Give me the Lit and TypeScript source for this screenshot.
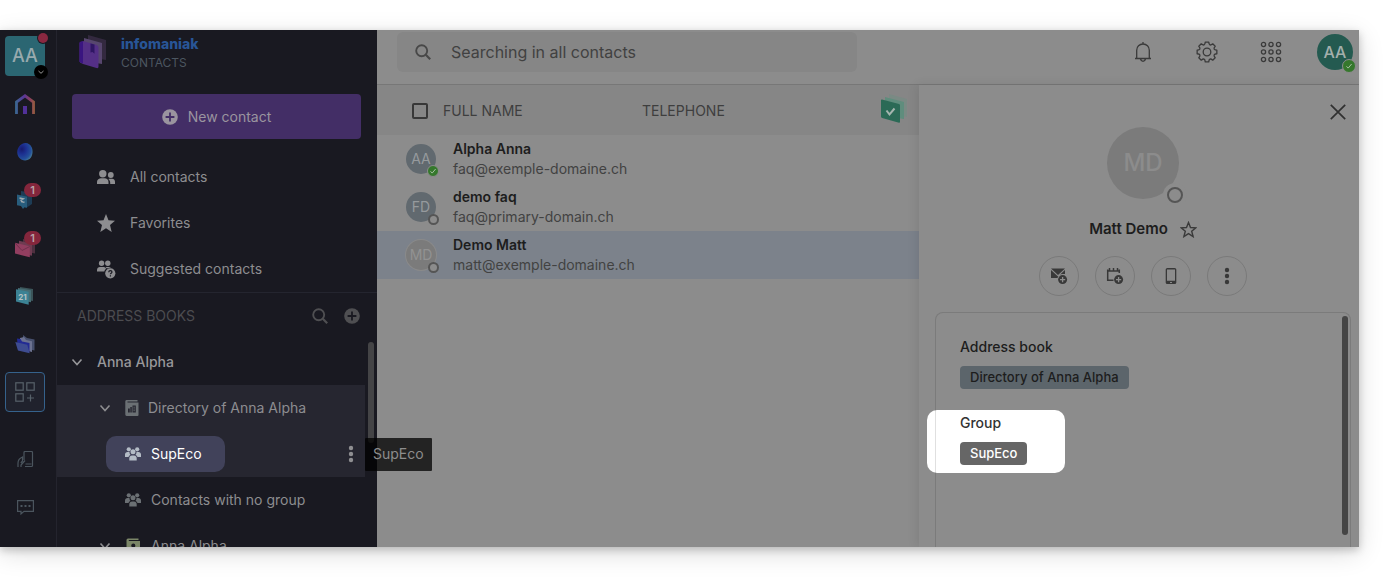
import { LitElement, html, css, svg, nothing, TemplateResult } from "lit";
import { customElement, property, state } from "lit/decorators.js";
import { classMap } from "lit/directives/class-map.js";

const base = css`
  *, *::before, *::after { box-sizing: border-box; }
  :host { font-family: Inter, "Liberation Sans", sans-serif; font-size: 14px; line-height: 20px; }
  button, input { font: inherit; color: inherit; }
  button { background: none; border: 0; padding: 0; margin: 0; text-align: left; cursor: pointer; }
  a { color: inherit; text-decoration: none; }
  svg { display: block; flex: none; }
`;

const draw = (w: number, h: number, body: unknown) => html`
  <svg width=${w} height=${h} viewBox="0 0 ${w} ${h}" fill="none" aria-hidden="true">${body}</svg>`;

const chevron = draw(12, 12, svg`<path d="M1.500 3.500 6 8.500l4.500-5" stroke="currentColor" stroke-width="1.600"/>`);
const magnifier = draw(16, 16, svg`<circle cx="6.700" cy="6.700" r="5.500" stroke="currentColor" stroke-width="1.900"/><path d="m10.800 10.800 4.400 4.400" stroke="currentColor" stroke-width="2.200"/>`);
const plusDisc = (ink: string) => draw(16, 16, svg`<circle cx="8" cy="8" r="7.800" fill="currentColor"/><path d="M8 3.600v8.800M3.600 8h8.800" stroke=${ink} stroke-width="1.800"/>`);
const dots = draw(6, 18, svg`<g fill="currentColor"><circle cx="3" cy="3" r="2.200"/><circle cx="3" cy="9" r="2.200"/><circle cx="3" cy="15" r="2.200"/></g>`);
const people = draw(18, 16, svg`<g fill="currentColor"><circle cx="5.800" cy="4.700" r="3.700"/><path d="M0 15v-2c0-2.400 2.200-3.700 4-3.700h3.600c2 0 3.900 1.300 3.900 3.700v2z"/><circle cx="13.800" cy="6" r="2.900"/><path d="M11.300 10c1.200 1 1.900 2.200 1.900 3.700V15H18v-2.200c0-1.800-1.300-3-3-3h-2.600z"/></g>`);
const star = draw(18, 18, svg`<path fill="currentColor" d="m9 0 2.500 6.300 6.500.5-5 4.200 1.700 7L9 14.200 3.300 18 5 11 0 6.800l6.500-.5z"/>`);
const suggested = draw(19, 19, svg`<g fill="currentColor"><circle cx="4.600" cy="3.200" r="2.700"/><circle cx="10.800" cy="3.200" r="2.700"/><path d="M0 11.500V10c0-1.800 1.300-3 3-3h3.300c1.300 0 2.200.6 2.800 1.700-1 .8-1.600 1.700-1.800 2.800zM8.300 7h3.700c1 0 1.700.3 2.200.9-1.600-.3-3 0-4.300.7-.4-.6-.9-1.200-1.600-1.600z"/><circle cx="13.300" cy="13.300" r="5.100"/></g><path d="M11.700 12.200c.1-1 .7-1.500 1.600-1.500 1 0 1.700.5 1.700 1.400 0 1.100-1.600 1.100-1.600 2.200M13.400 15.300v1.200" stroke="#191921" stroke-width="1.200"/>`);
const group = draw(16, 14, svg`<g fill="currentColor"><circle cx="3.800" cy="2.300" r="2.100"/><circle cx="12.200" cy="2.300" r="2.100"/><circle cx="8" cy="4.800" r="2.500"/><path d="M0 10V7.600C0 6 1.100 5 2.500 5h2c0 1.500.4 2.300 1.200 3-1.200.4-1.900 1.100-2.100 2zM16 10V7.600C16 6 14.900 5 13.500 5h-2c0 1.500-.4 2.300-1.200 3 1.200.4 1.900 1.100 2.100 2zM4.300 13.500v-2.300c0-1.700 1.200-2.700 2.700-2.700h2c1.500 0 2.700 1 2.700 2.700v2.300z"/></g>`);
const directory = draw(14, 16, svg`<path fill="currentColor" d="M2 0h10.500v1.500H2.500v1H13.500V15a1 1 0 0 1-1 1H1.500A1.500 1.500 0 0 1 .3 14.500v-13A1.500 1.500 0 0 1 2 0z"/><path fill="#262630" d="M3 8.500h1.800v4H3zM5.300 7h1.500v5.500H5.300zM7.500 5.500h3.300v7H7.500z"/><path stroke="#6b7074" stroke-width=".8" d="M8.400 7.200h1.500M8.400 9h1.500M8.400 10.700h1.500"/>`);
const book = draw(14, 16, svg`<path fill="#7b8668" d="M2 .5h10.500V2H2.800v1H14v13H.5V2A1.500 1.500 0 0 1 2 .5z"/><circle cx="7.300" cy="7.500" r="2" fill="#191921"/><path d="M4 12.500c0-2 1.500-2.800 3.300-2.800s3.300.8 3.300 2.800z" fill="#191921"/>`);

const railHome = draw(20, 20, svg`
  <defs><linearGradient id="g" x1="0" x2="20" y1="0" y2="0" gradientUnits="userSpaceOnUse"><stop offset="0" stop-color="#386b90"/><stop offset=".45" stop-color="#59369a"/><stop offset=".75" stop-color="#8b3f5f"/><stop offset="1" stop-color="#96603c"/></linearGradient></defs>
  <path d="M1.500 20V8L10 1.800 18.500 8v12" stroke="url(#g)" stroke-width="2.800"/><path d="M8 20v-8h4v8z" fill="#52319a"/>`);
const railBall = draw(18, 20, svg`
  <defs><radialGradient id="b" cx=".3" cy=".35" r=".8"><stop offset="0" stop-color="#171a6c"/><stop offset=".35" stop-color="#1c2f90"/><stop offset=".75" stop-color="#24509b"/><stop offset="1" stop-color="#4d8496"/></radialGradient></defs>
  <path d="M6 2c4-2 8-.5 9.800 3.500 1.500 4 .8 9-2.300 11.500-3 2.300-8 1.700-10.500-1.500C.2 12 .5 5 6 2z" fill="url(#b)"/>`);
const railChat = draw(20, 20, svg`<path d="m6 1 11 2v11l-6 4-5-2z" fill="#1d3c55"/><path d="m2 4.500 10 2.200v11L9.700 17 8 19l-2-3-4-.8z" fill="#285d7d"/><path d="m4.500 8 3.800.8-2.800 1.700M6 11.500l3.500.8M5.500 10.300l3 2.200" stroke="#a3aab0" stroke-width="1.400"/>`);
const railMail = draw(20, 20, svg`<path d="m8 1 12 2.500v12L8 13z" fill="#4e3040"/><path d="m4 2.700 13 3v12L4 15z" fill="#6f3b51"/><path d="m0 4.800 14.800 3.500v11L0 15.600z" fill="#923e60"/><path d="m0 5 7 7.500 7.800-4" stroke="#70304c" stroke-width="1"/>`);
const railCalendar = draw(20, 20, svg`<path d="m5 1 13 2v12L5 13z" fill="#3b5459"/><path d="m3 2 13 2.200v12L3 14z" fill="#476d74"/><path d="m1 3.200 12.700 2.600v13L1 15.500z" fill="#3c8294"/><text x="7.400" y="14" text-anchor="middle" font-size="8" font-weight="700" fill="#b6c2c5">21</text>`);
const railDrive = draw(20, 20, svg`<path d="m8 1 4 3 7.500 1.500v11L8 14z" fill="#47506e"/><path d="m5 4 4-1 2 3 6 1.300V18L5 15z" fill="#6c7290"/><path d="m2 4.500 3.500.5 1.500 2.500 7.500 1.500v9L3 16z" fill="#222a94"/><path d="m.300 8 12 2.800 2.400 8.500L3 16.500z" fill="#3e4c91"/>`);
const railApps = draw(20, 20, svg`<g stroke="#57616a" stroke-width="1.200"><rect x=".8" y=".8" width="7.400" height="7.400"/><rect x="11.800" y=".8" width="7.400" height="7.400"/><rect x=".8" y="11.800" width="7.400" height="7.400"/><path d="M15.500 12.500v7M12 16h7"/></g>`);
const railTouch = draw(17, 17, svg`<g stroke="#4b555e" stroke-width="1.200"><path d="M7 9V1.500c0-.6.400-1 1-1h6.500c.6 0 1 .4 1 1v13c0 .6-.4 1-1 1H8"/><path d="M1 16v-4c0-3 2-5 4.500-6v4L3.800 12M4 16v-2l4-4.500M8.500 13h6"/></g>`);
const railComment = draw(17, 17, svg`<path d="M.6 1.600h15.800v10.800H7L4 15v-2.600H.6z" stroke="#4b555e" stroke-width="1.200"/><path d="M3.500 6h2v2h-2zM7.500 6h2v2h-2zM11.500 6h2v2h-2z" fill="#4b555e"/>`);

const logo = draw(28, 35, svg`<path d="m9 0 18 5v20L9 22z" fill="#33293f"/><path d="m5 3 18 5v21L5 26z" fill="#57466e"/><path d="m4 6 13.500 4q2 .6 2 2.600v19q0 2-2 1.400L4 29q-3.500-1.200-3.500-2.500V8z" fill="#542f86"/><path d="M.5 7 4 6v22.500L.5 27z" fill="#3a1580"/><path d="m11.500 8.500 4 1.100v9.200l-2-1.800-2 .6z" fill="#2f1663"/>`);
const tasks = draw(27, 29, svg`<path d="m8 0 18 5v18L8 19z" fill="#7a8a84"/><path d="m4 3 19 5v17L4 22z" fill="#5f8d7d"/><path d="M1 5.500 18 10q1 .3 1 1.300v16.500q0 1.200-1 .9L1.200 24Q0 23.700 0 22.500V6.300Q0 5.200 1 5.500z" fill="#2b6a56"/><path d="m5.500 16.500 3 4 5-6" stroke="#a5b5af" stroke-width="2"/>`);

const bell = draw(18, 20, svg`<path stroke="#3a3a3a" stroke-width="1.300" d="M9 0v2M1 16.500h16M2.700 16.500V8.300C2.700 4.600 5.400 2 9 2s6.300 2.600 6.300 6.300v8.200M6.500 17c.4 1.500 1.300 2.300 2.500 2.300s2.100-.8 2.500-2.300"/>`);
const gear = (() => {
  const parts: string[] = [];
  for (let tooth = 0; tooth < 8; tooth++) {
    const at = (deg: number, r: number) => {
      const a = ((tooth * 45 + deg) * Math.PI) / 180;
      return `${(11 + r * Math.sin(a)).toFixed(2)} ${(11 - r * Math.cos(a)).toFixed(2)}`;
    };
    parts.push(`${tooth ? "L" : "M"}${at(10, 10)}Q${at(22.5, 5.6)} ${at(35, 10)}`);
  }
  return draw(22, 22, svg`<g stroke="#3a3a3a" stroke-width="1.300" stroke-linejoin="round"><circle cx="11" cy="11" r="3.800"/><path d=${parts.join("") + "Z"}/></g>`);
})();
const grid = draw(22, 22, svg`<g stroke="#3a3a3a" stroke-width="1.300">${[3.5, 11, 18.5].map((y) => [3.5, 11, 18.5].map((x) => svg`<circle cx=${x} cy=${y} r="2.100"/>`))}</g>`);
const cross = draw(16, 16, svg`<path d="m.8.8 14.400 14.400M15.200.8.800 15.200" stroke="#303030" stroke-width="1.700"/>`);
const starLine = draw(17, 17, svg`<path d="m8.500 1.500 2 5 5.300.4-4.100 3.400 1.400 5.300-4.600-2.900-4.600 2.900 1.400-5.300L1.200 6.900l5.300-.4z" stroke="#3a3a3a" stroke-width="1.400"/>`);
const mailAdd = draw(18, 18, svg`<path d="M1 1.500h14L8 8zM1 3v8h6.500c.6-2.300 2.500-4 5-4H15V3L8 9.400z" fill="#383838"/><circle cx="12.600" cy="12.600" r="4.500" fill="#383838"/><path d="M12.600 10v5.200M10 12.600h5.200" stroke="#8c8c8c" stroke-width="1.300"/>`);
const eventAdd = draw(18, 18, svg`<path d="M7.500 13.200H1.700V2.500M13.300 6V2.500M1 4h13M3.500 1v3M7.500 1v3M11.500 1v3" stroke="#383838" stroke-width="1.500"/><circle cx="12.600" cy="12.600" r="4.500" fill="#383838"/><path d="M12.600 10v5.200M10 12.600h5.200" stroke="#8c8c8c" stroke-width="1.300"/>`);
const phone = draw(12, 16, svg`<path fill="#383838" fill-rule="evenodd" d="M2.500 0h7A1.800 1.800 0 0 1 11.300 2v12a1.800 1.800 0 0 1-1.800 2h-7A1.800 1.800 0 0 1 .7 14V2A1.800 1.800 0 0 1 2.500 0zM2 1.500v11.300h8V1.500zM5 14v1h2v-1z"/>`);

@customElement("presence-avatar")
class PresenceAvatar extends LitElement {
  @property() initials = "";
  @property() tone = "slate";
  @property() presence = "";
  @property() size = "small";

  static styles = [base, css`
    :host { display: block; flex: none; }
    .avatar { position: relative; display: grid; place-items: center; border-radius: 50%; color: #969a9d; }
    .small { width: 30px; height: 30px; font-size: 14px; }
    .medium { width: 36px; height: 36px; font-size: 16px; font-weight: 500; }
    .large { width: 72px; height: 72px; font-size: 24px; font-weight: 500; }
    .slate { background: #61696f; }
    .teal { background: #245a50; color: #a3afac; }
    .grey { background: #7b7b7b; color: #8c8c8c; }
    .small.grey { box-shadow: 0 0 0 1px #8a8a8a; color: #929292; }
    .badge { position: absolute; right: -3px; bottom: -3px; width: 12px; height: 12px; border-radius: 50%; display: grid; place-items: center; }
    .online { background: #35782c; border: 1px solid #8c8c8c; }
    .offline { border: 2px solid #555; background: #8c8c8c; }
    .small .offline { width: 11px; height: 11px; }
    .medium .badge { width: 14px; height: 14px; }
    .large .badge { width: 16px; height: 16px; right: -4px; bottom: -4px; box-shadow: 0 0 0 4px #8c8c8c; }
  `];

  render() {
    return html`<div class="avatar ${this.size} ${this.tone}">${this.initials}
      ${this.presence ? html`<span class="badge ${this.presence}">${this.presence === "online"
        ? draw(8, 8, svg`<path d="m1.500 4.300 1.700 1.800L6.600 2" stroke="#a8c0a5" stroke-width="1"/>`) : nothing}</span>` : nothing}
    </div>`;
  }
}

@customElement("product-rail")
class ProductRail extends LitElement {
  static styles = [base, css`
    :host { display: block; flex: none; }
    .rail { display: flex; flex-direction: column; gap: 8px; height: 100%; width: 57px; padding: 6px 11px 20px 5px; border-right: 1px solid #24242e; background: #191921; }
    .item { position: relative; display: flex; align-items: center; justify-content: center; width: 40px; height: 40px; flex: none; border-radius: 4px; }
    .org { background: #2b6672; color: #98aaae; font-size: 18px; font-weight: 500; }
    .alert { position: absolute; right: -3px; top: -3px; width: 10px; height: 10px; border-radius: 50%; background: #8a2840; box-shadow: 0 0 0 1px #191921; }
    .open { position: absolute; right: -3px; bottom: -3px; width: 14px; height: 14px; border-radius: 50%; background: #000; color: #999; display: grid; place-items: center; }
    .count { position: absolute; left: 19px; top: 3px; width: 17px; height: 14px; border-radius: 7px; background: #84263c; color: #b8a3a8; font-size: 11px; line-height: 14px; font-weight: 600; text-align: center; }
    .apps { border: 1px solid #35628c; background: #20222d; }
    .foot { margin-top: auto; display: grid; gap: 8px; }
  `];

  render() {
    const apps: [string, TemplateResult, number?][] = [
      ["Home", railHome], ["Assistant", railBall], ["Chat", railChat, 1], ["Mail", railMail, 1],
      ["Calendar", railCalendar], ["Drive", railDrive],
    ];
    return html`<nav class="rail" aria-label="Products">
      <button class="item org" aria-label="Organisation AA"><span>AA</span><span class="alert"></span>
        <span class="open">${draw(8, 8, svg`<path d="m1.500 3 2.500 2.300L6.500 3" stroke="currentColor"/>`)}</span></button>
      ${apps.map(([name, icon, n]) => html`<a class="item" href="#" aria-label=${name}>${icon}${n ? html`<span class="count">${n}</span>` : nothing}</a>`)}
      <button class="item apps" aria-label="Add products">${railApps}</button>
      <div class="foot">
        <button class="item" aria-label="Shortcuts">${railTouch}</button>
        <button class="item" aria-label="Feedback">${railComment}</button>
      </div>
    </nav>`;
  }
}

@customElement("address-sidebar")
class AddressSidebar extends LitElement {
  static styles = [base, css`
    :host { display: block; flex: none; }
    .side { display: flex; flex-direction: column; width: 320px; height: 100%; background: #191921; color: #8d8d90; }
    .brand { display: flex; align-items: center; gap: 14px; height: 49px; padding: 0 22px 4px; }
    .names { display: grid; padding-top: 2px; }
    .maker { color: #285596; font-weight: 800; font-size: 14px; line-height: 18px; }
    .product { color: #4c5660; font-size: 12px; line-height: 20px; }
    .new { display: flex; align-items: center; justify-content: center; gap: 10px; height: 45px; margin: 15px 16px 15px 15px; border-radius: 4px; background: #432e66; color: #9a949f; }
    .link { display: flex; align-items: center; height: 46px; padding-left: 39px; }
    .glyph { display: grid; place-items: center; width: 20px; margin-right: 14px; }
    .nav { border-bottom: 1px solid #24252f; height: 139px; }
    .head { display: flex; align-items: center; height: 46px; padding: 0 17px 0 20px; color: #4c4c50; }
    .heading { margin: 0 auto 0 0; font-size: 14px; font-weight: 400; }
    .tool { color: #4f4f52; margin-left: 16px; }
    .body { display: flex; flex: 1; min-height: 0; }
    .tree { flex: 1; min-width: 0; overflow: hidden; }
    .row { position: relative; display: flex; align-items: center; height: 46px; }
    .node { display: flex; align-items: center; gap: 10px; }
    .top { padding-left: 14px; gap: 14px; font-weight: 500; color: #97979a; }
    .sub { padding-left: 42px; gap: 14px; }
    .leaf { padding-left: 49px; }
    .pick { padding: 0 23px 0 19px; height: 36px; border-radius: 10px; }
    .hot { background: #262630; }
    .on { background: #41425a; color: #fff; }
    .on .ico { color: #b4bcc6; }
    .ico { color: #6b7074; width: 16px; display: grid; place-items: center; }
    .slim { width: 13px; }
    .more { margin: 0 11px 0 auto; color: #8f8f92; }
    .gutter { width: 12px; padding: 3px 3px 0; }
    .thumb { height: 101px; border-radius: 3px; background: #444446; }
  `];

  render() {
    return html`<aside class="side">
      <div class="brand">${logo}<div class="names"><span class="maker">infomaniak</span><span class="product">CONTACTS</span></div></div>
      <button class="new">${plusDisc("#432e66")}New contact</button>
      <nav class="nav">
        <a class="link" href="#"><span class="glyph">${people}</span>All contacts</a>
        <a class="link" href="#"><span class="glyph">${star}</span>Favorites</a>
        <a class="link" href="#"><span class="glyph">${suggested}</span>Suggested contacts</a>
      </nav>
      <div class="head"><h2 class="heading">ADDRESS BOOKS</h2>
        <button class="tool" aria-label="Search address books">${magnifier}</button>
        <button class="tool" aria-label="Add address book">${plusDisc("#191921")}</button></div>
      <div class="body">
        <div class="tree">
          <button class="row top">${chevron}Anna Alpha</button>
          <div class="hot">
            <button class="row sub">${chevron}<span class="node"><span class="ico slim">${directory}</span>Directory of Anna Alpha</span></button>
            <div class="row leaf"><button class="node pick on"><span class="ico">${group}</span>SupEco</button>
              <button class="more" aria-label="More actions">${dots}</button></div>
          </div>
          <div class="row leaf"><button class="node pick"><span class="ico">${group}</span>Contacts with no group</button></div>
          <button class="row sub">${chevron}<span class="node"><span class="ico">${book}</span>Anna Alpha</span></button>
        </div>
        <div class="gutter"><div class="thumb"></div></div>
      </div>
    </aside>`;
  }
}

interface Contact { initials: string; name: string; mail: string; tone: string; presence: string; }

@customElement("contact-list")
class ContactList extends LitElement {
  @state() selected = 2;

  private contacts: Contact[] = [
    { initials: "AA", name: "Alpha Anna", mail: "faq@exemple-domaine.ch", tone: "slate", presence: "online" },
    { initials: "FD", name: "demo faq", mail: "faq@primary-domain.ch", tone: "slate", presence: "offline" },
    { initials: "MD", name: "Demo Matt", mail: "matt@exemple-domaine.ch", tone: "grey", presence: "offline" },
  ];

  static styles = [base, css`
    :host { display: block; flex: 1; min-width: 0; }
    .table { width: 100%; table-layout: fixed; border-collapse: collapse; }
    .table th, .table td { padding: 0; text-align: left; font-weight: 400; }
    .head { height: 50px; background: #868686; color: #3e3e3e; }
    .table .head th { padding-top: 2px; }
    .check-col { width: 66px; }
    .name-col { width: 199px; }
    .act-col { width: 38px; }
    .check { display: block; appearance: none; width: 16px; height: 16px; margin: 0 0 0 35px; border: 2px solid #383838; border-radius: 2px; }
    .row { height: 48px; cursor: pointer; }
    .selected { background: #7c828b; }
    .face { padding-left: 29px; display: block; }
    .who { display: grid; padding-left: 10px; white-space: nowrap; }
    .name { font-weight: 600; color: #1d1d1d; }
    .mail { color: #424242; }
  `];

  render() {
    return html`<table class="table">
      <thead><tr class="head">
        <th class="check-col"><input class="check" type="checkbox" aria-label="Select all contacts"></th>
        <th class="name-col">FULL NAME</th><th>TELEPHONE</th>
        <th class="act-col"><button aria-label="Tasks">${tasks}</button></th>
      </tr></thead>
      <tbody>${this.contacts.map((c, i) => html`
        <tr class=${classMap({ row: true, selected: i === this.selected })} @click=${() => (this.selected = i)}>
          <td><span class="face"><presence-avatar .initials=${c.initials} .tone=${c.tone} .presence=${c.presence}></presence-avatar></span></td>
          <td><span class="who"><span class="name">${c.name}</span><a class="mail" href="mailto:${c.mail}">${c.mail}</a></span></td>
          <td></td><td></td>
        </tr>`)}</tbody>
    </table>`;
  }
}

@customElement("contact-detail")
class ContactDetail extends LitElement {
  static styles = [base, css`
    :host { display: block; flex: none; }
    .detail { display: flex; flex-direction: column; align-items: center; width: 440px; height: 100%; position: relative; background: #8c8c8c; box-shadow: -2px 0 10px rgba(0, 0, 0, .09); }
    .close { align-self: flex-end; margin: 19px 13px 7px 0; }
    .title { display: flex; align-items: center; gap: 12px; margin: 20px 0 17px; color: #1d1d1d; }
    .name { margin: 0; font-size: 15px; font-weight: 600; line-height: 20px; }
    .actions { display: flex; gap: 16px; }
    .action { display: grid; place-items: center; width: 40px; height: 40px; border: 1px solid #7a7a7a; border-radius: 50%; color: #383838; }
    .summary { margin-left: 8px; display: flex; flex-direction: column; align-items: center; }
    .card { display: flex; align-self: stretch; flex: 1; min-height: 0; margin: 16px 8px 0 16px; border: 1px solid #7b7b7b; border-bottom: 0; border-radius: 8px 8px 0 0; }
    .fields { flex: 1; padding: 24px; display: grid; align-content: start; gap: 24px; }
    .field { position: relative; display: grid; justify-items: start; gap: 9px; color: #1d1d1d; }
    .label { margin: 0; font-size: 14px; font-weight: 500; position: relative; }
    .chip { position: relative; padding: 0 10px; border-radius: 4px; font-size: 13px; font-weight: 500; line-height: 23px; background: #5c656b; color: #1d1d1d; }
    .lit { color: #333; }
    .lit::before { content: ""; position: absolute; left: -33px; top: -3px; width: 138px; height: 63px; border-radius: 10px; background: linear-gradient(90deg, transparent 8px, #e0e0e0 8px, #e0e0e0 9px, transparent 9px) #fff; }
    .lit .chip { background: #666; color: #fff; }
    .bar { width: 8px; padding: 3px 2px 12px 0; }
    .thumb { height: 100%; border-radius: 3px; background: #454545; }
  `];

  render() {
    return html`<section class="detail" aria-label="Contact details">
      <button class="close" aria-label="Close">${cross}</button>
      <div class="summary">
        <presence-avatar initials="MD" tone="grey" size="large" presence="offline"></presence-avatar>
        <div class="title"><h2 class="name">Matt Demo</h2><button aria-label="Add to favorites">${starLine}</button></div>
        <div class="actions">
          <button class="action" aria-label="Send an email">${mailAdd}</button>
          <button class="action" aria-label="Create an event">${eventAdd}</button>
          <button class="action" aria-label="Call">${phone}</button>
          <button class="action" aria-label="More">${dots}</button>
        </div>
      </div>
      <div class="card">
        <div class="fields">
          <div class="field"><h3 class="label">Address book</h3><span class="chip">Directory of Anna Alpha</span></div>
          <div class="field lit"><h3 class="label">Group</h3><span class="chip">SupEco</span></div>
        </div>
        <div class="bar"><div class="thumb"></div></div>
      </div>
    </section>`;
  }
}

@customElement("app-root")
class AppRoot extends LitElement {
  static styles = [base, css`
    :host { display: block; padding: 30px 30px 30px 0; box-sizing: border-box; height: 100vh; overflow: hidden; background: #fff; }
    .frame { position: relative; height: 100%; box-shadow: 0 3px 8px rgba(0, 0, 0, .2), 0 6px 24px rgba(0, 0, 0, .14); }
    .shell { display: flex; height: 100%; overflow: hidden; background: #8c8c8c; }
    .main { display: flex; flex-direction: column; flex: 1; min-width: 0; }
    .bar { display: flex; align-items: center; justify-content: space-between; flex: none; height: 55px; padding: 0 6px 11px 20px; border-bottom: 1px solid #777; }
    .search { display: flex; align-items: center; gap: 20px; width: 460px; height: 40px; padding: 0 18px; border-radius: 6px; background: #868686; color: #484848; }
    .query { flex: 1; min-width: 0; padding: 0; border: 0; outline: 0; background: none; font-size: 16px; }
    .query::placeholder { color: #414141; opacity: 1; }
    .tools { display: flex; align-items: center; }
    .tool { display: grid; place-items: center; width: 64px; height: 40px; }
    .me { margin-left: 14px; }
    .content { display: flex; flex: 1; min-height: 0; }
    .tip { position: absolute; left: 365px; top: 408px; z-index: 3; padding: 6px 8px 7px; border-radius: 1px; background: rgba(0, 0, 0, .75); color: #8d8d8d; }
  `];

  render() {
    return html`<div class="frame">
      <div class="shell">
        <product-rail></product-rail>
        <address-sidebar></address-sidebar>
        <main class="main">
          <header class="bar">
            <label class="search">${magnifier}<input class="query" type="search" placeholder="Searching in all contacts" aria-label="Search contacts"></label>
            <div class="tools">
              <button class="tool" aria-label="Notifications">${bell}</button>
              <button class="tool" aria-label="Settings">${gear}</button>
              <button class="tool" aria-label="Applications">${grid}</button>
              <presence-avatar class="me" initials="AA" tone="teal" size="medium" presence="online"></presence-avatar>
            </div>
          </header>
          <div class="content"><contact-list></contact-list><contact-detail></contact-detail></div>
        </main>
      </div>
      <div class="tip" role="tooltip">SupEco</div>
    </div>`;
  }
}
